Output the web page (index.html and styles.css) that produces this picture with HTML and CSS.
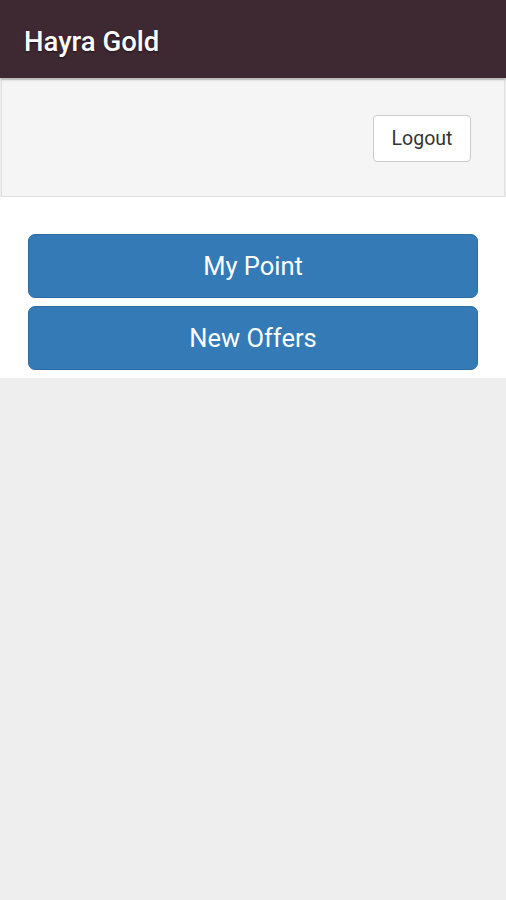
FILE: index.html
```html
<!DOCTYPE html>
<html>
<head>
<meta charset="utf-8">
<link rel="stylesheet" href="styles.css">
</head>
<body>
<header class="topbar"><h1 class="title">Hayra Gold</h1></header>
<div class="well">
  <button class="btn-logout">Logout</button>
</div>
<main class="content">
  <button class="btn-primary">My Point</button>
  <button class="btn-primary">New Offers</button>
</main>
</body>
</html>
```
FILE: styles.css
```css
html, body {
  margin: 0;
  padding: 0;
  background: #eeeeee;
  font-family: Roboto, "Noto Sans", sans-serif;
}
.topbar {
  height: 78px;
  background: #3e2831;
  display: flex;
  align-items: center;
  padding: 0 24px;
  box-shadow: 0 1px 3px rgba(0,0,0,0.35);
  position: relative;
  z-index: 1;
}
.title {
  margin: 0;
  color: #ffffff;
  font-size: 27.5px;
  font-weight: 500;
  text-shadow: 0 1px 2px rgba(0,0,0,0.5);
  padding-top: 4px;
}
.well {
  background: #f5f5f5;
  border: 1px solid #e0e0e0;
  margin: 1px 1px 0 1px;
  height: 118px;
  box-sizing: border-box;
  display: flex;
  align-items: center;
  justify-content: flex-end;
  padding: 0 33px 0 19px;
}
.btn-logout {
  width: 98px;
  height: 47px;
  background: #ffffff;
  border: 1px solid #cccccc;
  border-radius: 4px;
  color: #333333;
  font-family: Roboto, "Noto Sans", sans-serif;
  font-size: 19.5px;
  padding: 0;
  margin-top: 1px;
}
.content {
  background: #ffffff;
  padding: 37px 28px 8px 28px;
  display: flex;
  flex-direction: column;
  gap: 8px;
}
.btn-primary {
  height: 64px;
  background: #337ab7;
  border: 1px solid #2e6da4;
  border-radius: 7px;
  color: #ffffff;
  font-family: Roboto, "Noto Sans", sans-serif;
  font-size: 25.5px;
  padding: 0;
}
```
